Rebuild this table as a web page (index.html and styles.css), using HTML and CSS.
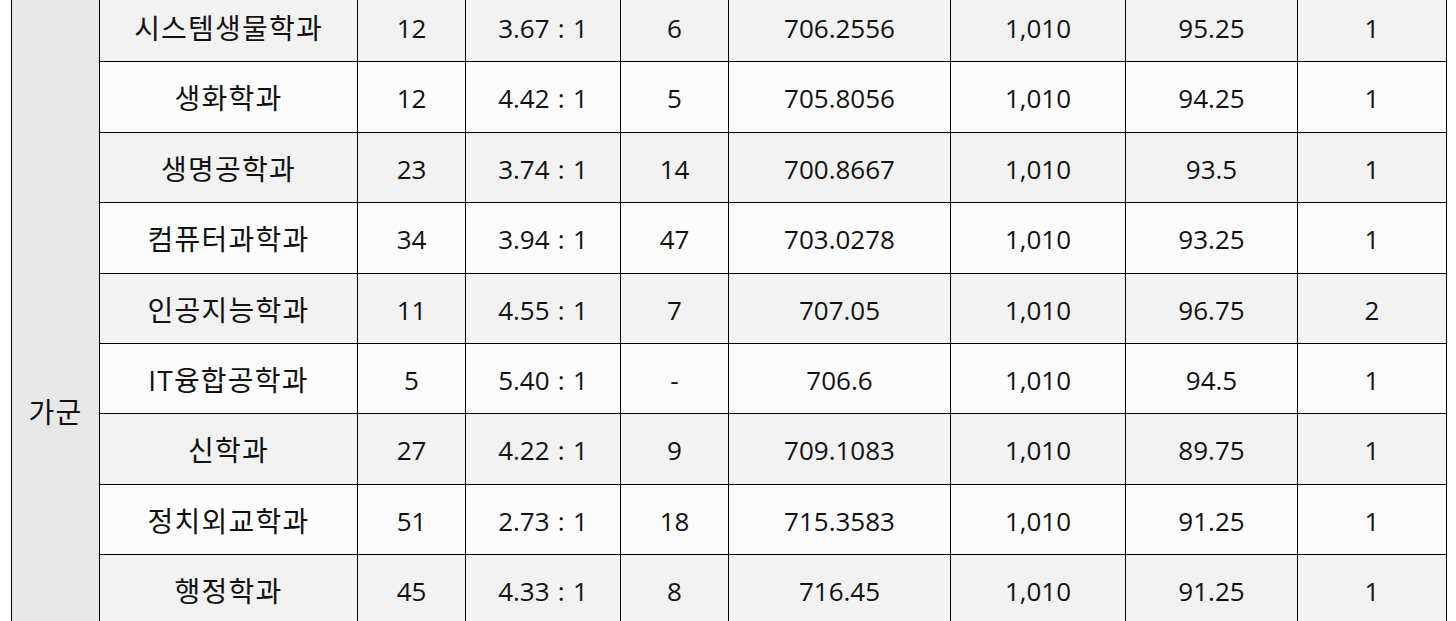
FILE: index.html
```html
<!DOCTYPE html>
<html lang="ko">
<head>
<meta charset="utf-8">
<title>가군 모집 결과</title>
<link rel="stylesheet" href="styles.css">
</head>
<body>
<div class="page">
  <div class="table">
    <div class="group">가군</div>

    <div class="row alt"><div class="name">시스템생물학과</div><div>12</div><div class="ratio">3.67 : 1</div><div>6</div><div>706.2556</div><div>1,010</div><div>95.25</div><div>1</div></div>
    <div class="row"><div class="name">생화학과</div><div>12</div><div class="ratio">4.42 : 1</div><div>5</div><div>705.8056</div><div>1,010</div><div>94.25</div><div>1</div></div>
    <div class="row alt"><div class="name">생명공학과</div><div>23</div><div class="ratio">3.74 : 1</div><div>14</div><div>700.8667</div><div>1,010</div><div>93.5</div><div>1</div></div>
    <div class="row"><div class="name">컴퓨터과학과</div><div>34</div><div class="ratio">3.94 : 1</div><div>47</div><div>703.0278</div><div>1,010</div><div>93.25</div><div>1</div></div>
    <div class="row alt"><div class="name">인공지능학과</div><div>11</div><div class="ratio">4.55 : 1</div><div>7</div><div>707.05</div><div>1,010</div><div>96.75</div><div>2</div></div>
    <div class="row"><div class="name">IT융합공학과</div><div>5</div><div class="ratio">5.40 : 1</div><div>-</div><div>706.6</div><div>1,010</div><div>94.5</div><div>1</div></div>
    <div class="row alt"><div class="name">신학과</div><div>27</div><div class="ratio">4.22 : 1</div><div>9</div><div>709.1083</div><div>1,010</div><div>89.75</div><div>1</div></div>
    <div class="row"><div class="name">정치외교학과</div><div>51</div><div class="ratio">2.73 : 1</div><div>18</div><div>715.3583</div><div>1,010</div><div>91.25</div><div>1</div></div>
    <div class="row alt"><div class="name">행정학과</div><div>45</div><div class="ratio">4.33 : 1</div><div>8</div><div>716.45</div><div>1,010</div><div>91.25</div><div>1</div></div>
  </div>
</div>
</body>
</html>
```

FILE: styles.css
```css
html, body {
  margin: 0;
  padding: 0;
  background: #ffffff;
  overflow: hidden;
}

.page {
  padding-left: 11px;
  width: 1436px;
}

.table {
  margin-top: -9px;
  display: grid;
  grid-template-columns: 87px 257px 107px 154px 107px 221px 174px 171px 148px;
  grid-template-rows: 69px 70px 69px 70px 69px 69px 70px 69px 70px;
  gap: 1px;
  padding: 1px;
  background: #000000;
  font-family: "Open Sans", "Noto Sans CJK KR", sans-serif;
  font-size: 26px;
  color: #111111;
}

.group {
  grid-column: 1;
  grid-row: 1 / span 9;
  background: #e8e8e8;
  display: flex;
  align-items: center;
  justify-content: center;
  padding-top: 204px;
  font-size: 28px;
  letter-spacing: 1.2px;
}

.row {
  display: contents;
}

.row > div {
  display: flex;
  align-items: center;
  justify-content: center;
  background: #fcfcfc;
  white-space: nowrap;
  padding-top: 2px;
}

.row > .name {
  font-size: 28px;
  letter-spacing: 1.2px;
  padding-top: 0;
}

.row > .ratio {
  word-spacing: 1.5px;
}

.row.alt > div {
  background: #f2f2f2;
}
```
